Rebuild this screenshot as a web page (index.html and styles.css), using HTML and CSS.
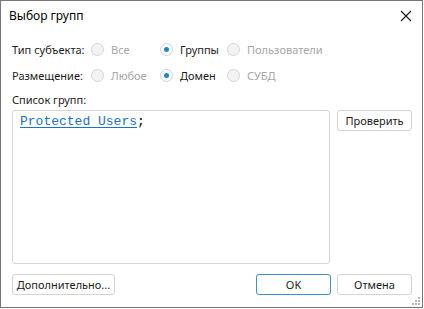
FILE: index.html
```html
<!DOCTYPE html>
<html lang="ru">
<head>
<meta charset="utf-8">
<title>Выбор групп</title>
<link rel="stylesheet" href="styles.css">
</head>
<body>
<div class="window">
  <div class="titlebar">
    <span class="title">Выбор групп</span>
    <svg class="close" width="12" height="12" viewBox="0 0 12 12"><path d="M1 1L11 11M11 1L1 11" stroke="#1a1a1a" stroke-width="1.1" fill="none"/></svg>
  </div>
  <div class="content">
    <div class="row">
      <span class="label">Тип субъекта:</span>
      <span class="radio disabled w1"><i class="dot"></i>Все</span>
      <span class="radio checked w2"><i class="dot"></i>Группы</span>
      <span class="radio disabled"><i class="dot"></i>Пользователи</span>
    </div>
    <div class="row">
      <span class="label">Размещение:</span>
      <span class="radio disabled w1"><i class="dot"></i>Любое</span>
      <span class="radio checked w2"><i class="dot"></i>Домен</span>
      <span class="radio disabled"><i class="dot"></i>СУБД</span>
    </div>
    <div class="list-label">Список групп:</div>
    <div class="list-area">
      <div class="textbox"><span class="link">Protected Users</span>;</div>
      <button class="btn w75">Проверить</button>
    </div>
    <div class="footer">
      <button class="btn more">Дополнительно...</button>
      <div class="spacer"></div>
      <button class="btn w75 primary">OK</button>
      <button class="btn w75">Отмена</button>
    </div>
  </div>
  <svg class="grip" width="10" height="10" viewBox="0 0 10 10" fill="#b5b5b5">
    <rect x="7" y="1" width="2" height="2"/>
    <rect x="4" y="4" width="2" height="2"/><rect x="7" y="4" width="2" height="2"/>
    <rect x="1" y="7" width="2" height="2"/><rect x="4" y="7" width="2" height="2"/><rect x="7" y="7" width="2" height="2"/>
  </svg>
</div>
</body>
</html>
```
FILE: styles.css
```css
html, body {
  margin: 0;
  padding: 0;
  background: #ffffff;
}
body {
  width: 424px;
  height: 309px;
  font-family: "Noto Sans", "Open Sans", sans-serif;
  font-size: 11px;
  color: #1b1b1b;
  white-space: nowrap;
}
.window {
  position: relative;
  box-sizing: border-box;
  width: 423px;
  height: 308px;
  border: 1px solid #767676;
  background: #ffffff;
  display: flex;
  flex-direction: column;
}
.titlebar {
  height: 31px;
  display: flex;
  align-items: center;
  padding: 0 10px 0 8px;
  justify-content: space-between;
}
.title {
  font-size: 12px;
  color: #000;
  margin-top: -2px;
}
.close {
  margin-top: -1px;
}
.content {
  flex: 1;
  display: flex;
  flex-direction: column;
  padding: 4px 10px 0 11px;
}
.row {
  height: 26px;
  display: flex;
  align-items: center;
}
.label {
  width: 79px;
  flex: none;
}
.radio {
  display: flex;
  align-items: center;
  gap: 7px;
}
.radio.w1 { width: 69px; }
.radio.w2 { width: 67px; }
.radio.disabled { color: #a6a6a6; }
.dot {
  box-sizing: border-box;
  width: 13px;
  height: 13px;
  border-radius: 50%;
  border: 1px solid #d4d4d4;
  background: #f3f3f3;
  display: inline-block;
  position: relative;
}
.checked .dot {
  background: #ffffff;
  border-color: #c9d3dc;
}
.checked .dot::after {
  content: "";
  position: absolute;
  left: 3px;
  top: 3px;
  width: 5px;
  height: 5px;
  border-radius: 50%;
  background: #1f86cc;
}
.list-label {
  height: 16px;
  margin-top: 4px;
  line-height: 16px;
}
.list-area {
  margin-top: 2px;
  display: flex;
  gap: 7px;
  align-items: flex-start;
}
.textbox {
  box-sizing: border-box;
  width: 318px;
  height: 154px;
  border: 1px solid #d6d6d6;
  border-radius: 3px;
  padding: 3px 7px;
  font-family: "Liberation Mono", "Courier New", monospace;
  font-size: 13px;
  line-height: 16px;
  color: #000;
}
.link {
  color: #1a72c4;
  text-decoration: underline;
  text-underline-offset: 2px;
}
.btn {
  box-sizing: border-box;
  height: 21px;
  border: 1px solid #d3d3d3;
  border-radius: 3px;
  background: #ffffff;
  font-family: inherit;
  font-size: 11px;
  color: #1b1b1b;
  padding: 0;
}
.w75 { width: 75px; }
.more { width: 103px; }
.primary { border-color: #3d8fcf; }
.footer {
  margin-top: 10px;
  display: flex;
  gap: 6px;
}
.spacer { flex: 1; }
.grip {
  position: absolute;
  right: 1px;
  bottom: 1px;
}
```
